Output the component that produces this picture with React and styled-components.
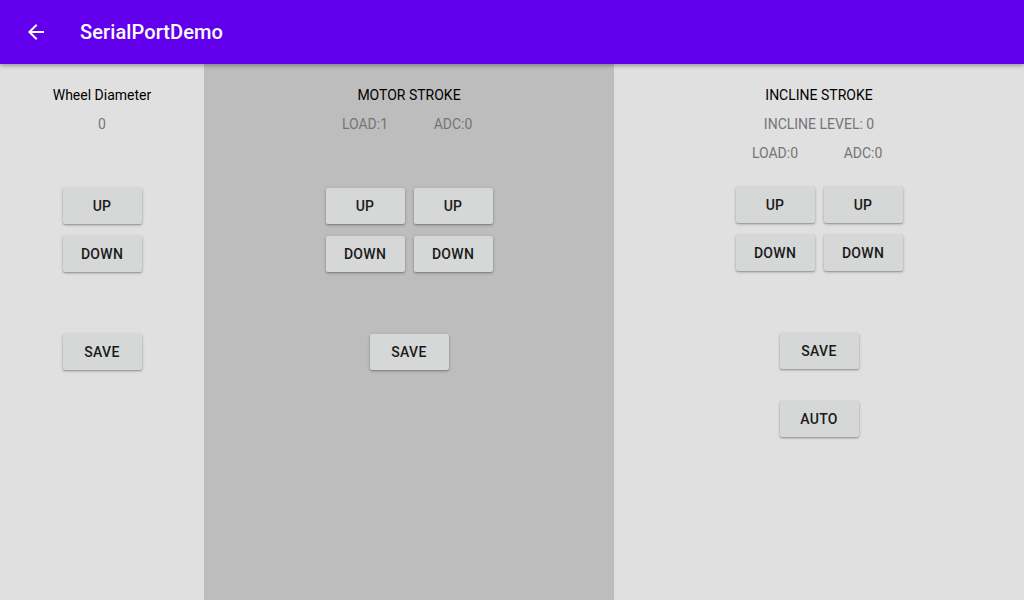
import styled, { createGlobalStyle } from "styled-components";

const Global = createGlobalStyle`
    html, body {
        margin: 0;
        padding: 0;
        height: 100%;
        overflow: hidden;
    }
    body {
        font-family: Roboto, "Noto Sans", sans-serif;
        background: #e0e0e0;
    }
    #root {
        height: 100%;
    }
`;

const Screen = styled.div`
    display: flex;
    flex-direction: column;
    height: 600px;
    width: 1024px;
`;

const AppBar = styled.header`
    height: 64px;
    flex: none;
    background-color: #6200ee;
    display: flex;
    align-items: center;
    padding-left: 24px;
    box-shadow: 0 2px 4px rgba(0, 0, 0, 0.3);
    position: relative;
    z-index: 2;

    h1 {
        margin: 0 0 0 32px;
        color: #fff;
        font-size: 20px;
        font-weight: 500;
        letter-spacing: 0.1px;
    }
`;

const BackIcon = styled.svg`
    width: 24px;
    height: 24px;
    display: block;
`;

const Body = styled.main`
    flex: 1;
    display: flex;
`;

const Column = styled.section`
    width: ${(p) => p.$width}px;
    background-color: ${(p) => (p.$dark ? "#bdbdbd" : "#e0e0e0")};
    display: flex;
    flex-direction: column;
    align-items: center;
    padding-top: 17px;
`;

const Title = styled.div`
    font-size: 14px;
    line-height: 29px;
    color: #000;
`;

const Value = styled.div`
    font-size: 14px;
    line-height: 29px;
    color: #757575;
`;

const Pair = styled.div`
    display: flex;
    gap: 9px;
`;

const Cell = styled.div`
    width: 79px;
    text-align: center;
    font-size: 14px;
    line-height: 29px;
    color: #757575;
`;

const Stack = styled.div`
    display: flex;
    flex-direction: column;
    gap: 12px;
    margin-top: ${(p) => p.$top}px;
`;

const Button = styled.button`
    width: 79px;
    height: 36px;
    margin-top: ${(p) => p.$top || 0}px;
    border: none;
    border-radius: 2px;
    background-color: #d6d7d7;
    box-shadow: 0 1px 3px rgba(0, 0, 0, 0.3), 0 1px 1px rgba(0, 0, 0, 0.12);
    font-family: Roboto, "Noto Sans", sans-serif;
    font-size: 14px;
    font-weight: 500;
    color: #1a1a1a;
    text-transform: uppercase;
    letter-spacing: 0.3px;
    padding: 0;
`;

export default function App() {
    return (
        <Screen>
            <Global />
            <AppBar>
                <BackIcon viewBox="0 0 24 24">
                    <path fill="#fff" d="M20 11H7.83l5.59-5.59L12 4l-8 8 8 8 1.41-1.41L7.83 13H20v-2z" />
                </BackIcon>
                <h1>SerialPortDemo</h1>
            </AppBar>
            <Body>
                <Column $width={204}>
                    <Title>Wheel Diameter</Title>
                    <Value>0</Value>
                    <Stack $top={49}>
                        <Button>Up</Button>
                        <Button>Down</Button>
                    </Stack>
                    <Button $top={62}>Save</Button>
                </Column>

                <Column $width={410} $dark>
                    <Title>MOTOR STROKE</Title>
                    <Pair>
                        <Cell>LOAD:1</Cell>
                        <Cell>ADC:0</Cell>
                    </Pair>
                    <Stack $top={49}>
                        <Pair>
                            <Button>Up</Button>
                            <Button>Up</Button>
                        </Pair>
                        <Pair>
                            <Button>Down</Button>
                            <Button>Down</Button>
                        </Pair>
                    </Stack>
                    <Button $top={62}>Save</Button>
                </Column>

                <Column $width={410}>
                    <Title>INCLINE STROKE</Title>
                    <Value>INCLINE LEVEL: 0</Value>
                    <Pair>
                        <Cell>LOAD:0</Cell>
                        <Cell>ADC:0</Cell>
                    </Pair>
                    <Stack $top={19}>
                        <Pair>
                            <Button>Up</Button>
                            <Button>Up</Button>
                        </Pair>
                        <Pair>
                            <Button>Down</Button>
                            <Button>Down</Button>
                        </Pair>
                    </Stack>
                    <Button $top={62}>Save</Button>
                    <Button $top={32}>Auto</Button>
                </Column>
            </Body>
        </Screen>
    );
}
